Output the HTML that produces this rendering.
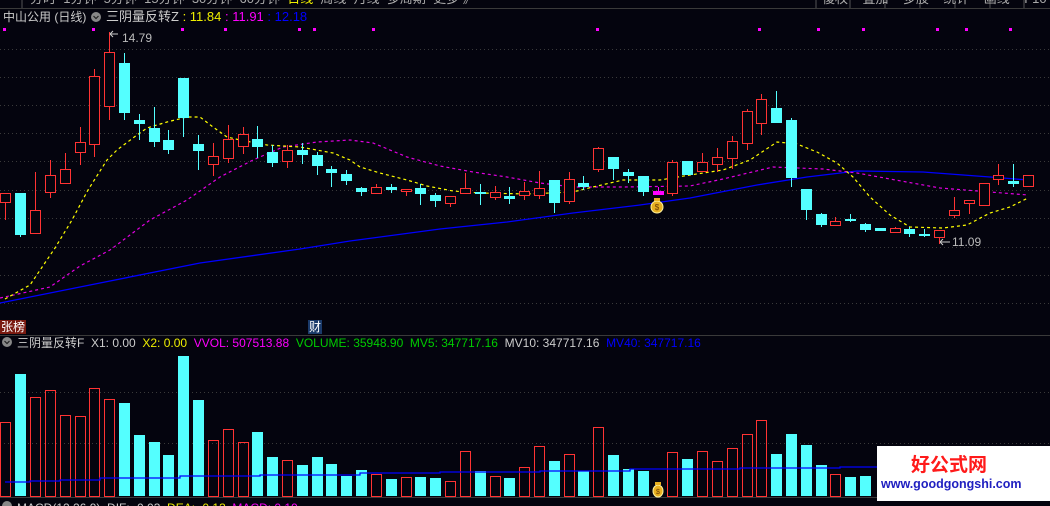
<!DOCTYPE html>
<html><head><meta charset="utf-8"><style>
html,body{margin:0;padding:0;background:#04040e;width:1050px;height:506px;overflow:hidden;font-family:"Liberation Sans","Noto Sans CJK SC",sans-serif;position:relative}
svg{position:absolute;left:0;top:0}
.t{position:absolute;white-space:nowrap;font-size:12.5px;line-height:14px}
.r{fill:#04040e;stroke:#ff3333;stroke-width:1}
.vr{fill:none;stroke:#ff3333;stroke-width:1}
.c{fill:#54ffff}
</style></head><body>
<svg width="1050" height="506" xmlns="http://www.w3.org/2000/svg">
<rect x="0" y="0" width="1050" height="8" fill="#04040e"/>
<line x1="0" y1="8.5" x2="1050" y2="8.5" stroke="#3a3a3a"/>
<g stroke="#555"><line x1="816" y1="0" x2="816" y2="8"/><line x1="850" y1="0" x2="850" y2="8"/><line x1="885" y1="0" x2="885" y2="8"/><line x1="920" y1="0" x2="920" y2="8"/><line x1="955" y1="0" x2="955" y2="8"/><line x1="990" y1="0" x2="990" y2="8"/><line x1="1024" y1="0" x2="1024" y2="8"/><line x1="22" y1="0" x2="22" y2="8"/></g>
<g stroke="#3a3a3a" stroke-dasharray="1,3">
<line x1="0" y1="49.5" x2="1050" y2="49.5"/><line x1="0" y1="77.5" x2="1050" y2="77.5"/><line x1="0" y1="105.5" x2="1050" y2="105.5"/><line x1="0" y1="133.5" x2="1050" y2="133.5"/><line x1="0" y1="161.5" x2="1050" y2="161.5"/><line x1="0" y1="190.5" x2="1050" y2="190.5"/><line x1="0" y1="218.5" x2="1050" y2="218.5"/><line x1="0" y1="247.5" x2="1050" y2="247.5"/><line x1="0" y1="275.5" x2="1050" y2="275.5"/><line x1="0" y1="303.5" x2="1050" y2="303.5"/>
<line x1="0" y1="392.5" x2="1050" y2="392.5"/><line x1="0" y1="443.5" x2="1050" y2="443.5"/>
</g>
<line x1="0" y1="335.5" x2="1050" y2="335.5" stroke="#3a3a3a"/>
<line x1="0" y1="497.5" x2="1050" y2="497.5" stroke="#3a3a3a"/>
<g fill="#ff00ff"><rect x="3" y="28" width="3" height="3"/><rect x="92" y="28" width="3" height="3"/><rect x="181" y="28" width="3" height="3"/><rect x="224" y="28" width="3" height="3"/><rect x="298" y="28" width="3" height="3"/><rect x="313" y="28" width="3" height="3"/><rect x="372" y="28" width="3" height="3"/><rect x="596" y="28" width="3" height="3"/><rect x="758" y="28" width="3" height="3"/><rect x="817" y="28" width="3" height="3"/><rect x="862" y="28" width="3" height="3"/><rect x="936" y="28" width="3" height="3"/><rect x="965" y="28" width="3" height="3"/><rect x="1009" y="28" width="3" height="3"/></g>
<polyline fill="none" stroke="#0000ff" stroke-width="1.3" points="0,303 100,283 200,263 300,249 350,241 440,229 507,222 573,213 640,205 690,198 757,185 807,177 857,171 923,172 990,177 1028,180"/>
<polyline fill="none" stroke="#e000e0" stroke-width="1.2" stroke-dasharray="3,3" points="0,298 50,287 80,266 110,250 150,220 187,200 220,177 253,160 283,147 317,142 350,140 373,143 407,157 440,166 473,172 507,177 540,183 573,187 623,187 690,186 723,179 773,167 823,169 857,173 890,179 940,188 990,192 1028,195"/>
<polyline fill="none" stroke="#ffff00" stroke-width="1.2" stroke-dasharray="3,3" points="5,299 30,285 55,248 72,220 88,190 107,160 117,150 137,135 147,128 167,122 187,117 200,117 213,127 227,137 240,140 267,145 300,147 333,153 350,160 360,167 380,173 407,180 427,186 453,191 480,193 527,194 573,192 593,187 623,180 660,180 690,175 723,170 750,160 777,142 797,144 817,152 837,163 853,177 870,197 890,215 910,227 943,228 967,225 990,213 1010,207 1028,198"/>
<path stroke="#ff3333" fill="none" d="M5.5 193V220M35.5 172V233M50.5 160V198M65.5 153V183M80.5 127V165M94.5 69V157M109.5 32V120M213.5 143V176M228.5 125V163M243.5 127V154M287.5 145V168M376.5 184V193M406.5 189V196M450.5 196V207M465.5 173V193M495.5 186V200M524.5 182V200M539.5 171V199M569.5 172V204M598.5 147V172M672.5 160V196M702.5 153V171M717.5 148V172M732.5 136V169M747.5 109V150M761.5 94V135M835.5 217V225M895.5 227V233M939.5 230V244M954.5 197V218M969.5 200V214M998.5 164V185"/>
<path stroke="#54ffff" fill="none" d="M20.5 193V237M124.5 53V120M139.5 114V140M154.5 107V147M168.5 130V154M183.5 78V137M198.5 135V170M257.5 126V158M272.5 145V167M302.5 143V164M317.5 152V175M331.5 166V187M346.5 170V185M361.5 187V196M391.5 184V193M420.5 184V205M435.5 193V207M480.5 184V205M509.5 187V204M554.5 180V213M583.5 176V190M613.5 157V180M628.5 169V183M643.5 176V196M776.5 91V123M791.5 118V187M806.5 189V220M821.5 213V227M850.5 214V222M865.5 223V232M909.5 227V237M924.5 229V237M1013.5 164V187"/>
<g class="r">
<rect x="0.5" y="193.5" width="10" height="9"/><rect x="30.5" y="210.5" width="10" height="23"/><rect x="45.5" y="175.5" width="10" height="17"/><rect x="60.5" y="169.5" width="10" height="14"/><rect x="75.5" y="142.5" width="10" height="10"/><rect x="89.5" y="76.5" width="10" height="68"/><rect x="104.5" y="52.5" width="10" height="54"/><rect x="208.5" y="156.5" width="10" height="8"/><rect x="223.5" y="139.5" width="10" height="19"/><rect x="238.5" y="134.5" width="10" height="12"/><rect x="282.5" y="150.5" width="10" height="11"/><rect x="371.5" y="187.5" width="10" height="6"/><rect x="401.5" y="189.5" width="10" height="2"/><rect x="445.5" y="196.5" width="10" height="7"/><rect x="460.5" y="188.5" width="10" height="5"/><rect x="490.5" y="192.5" width="10" height="5"/><rect x="519.5" y="191.5" width="10" height="4"/><rect x="534.5" y="188.5" width="10" height="7"/><rect x="564.5" y="179.5" width="10" height="22"/><rect x="593.5" y="148.5" width="10" height="21"/><rect x="667.5" y="162.5" width="10" height="31"/><rect x="697.5" y="162.5" width="10" height="9"/><rect x="712.5" y="157.5" width="10" height="7"/><rect x="727.5" y="141.5" width="10" height="17"/><rect x="742.5" y="111.5" width="10" height="32"/><rect x="756.5" y="99.5" width="10" height="24"/><rect x="830.5" y="221.5" width="10" height="4"/><rect x="890.5" y="228.5" width="10" height="4"/><rect x="934.5" y="230.5" width="10" height="7"/><rect x="949.5" y="210.5" width="10" height="5"/><rect x="964.5" y="200.5" width="10" height="3"/><rect x="979.5" y="183.5" width="10" height="22"/><rect x="993.5" y="175.5" width="10" height="4"/><rect x="1023.5" y="175.5" width="10" height="11"/>
</g>
<g class="c">
<rect x="15" y="193" width="11" height="42"/><rect x="119" y="63" width="11" height="50"/><rect x="134" y="120" width="11" height="4"/><rect x="149" y="128" width="11" height="14"/><rect x="163" y="140" width="11" height="10"/><rect x="178" y="78" width="11" height="40"/><rect x="193" y="144" width="11" height="7"/><rect x="252" y="139" width="11" height="8"/><rect x="267" y="152" width="11" height="11"/><rect x="297" y="150" width="11" height="5"/><rect x="312" y="155" width="11" height="11"/><rect x="326" y="169" width="11" height="4"/><rect x="341" y="174" width="11" height="7"/><rect x="356" y="188" width="11" height="4"/><rect x="386" y="187" width="11" height="3"/><rect x="415" y="188" width="11" height="6"/><rect x="430" y="195" width="11" height="6"/><rect x="475" y="192" width="11" height="2"/><rect x="504" y="196" width="11" height="3"/><rect x="549" y="180" width="11" height="23"/><rect x="578" y="183" width="11" height="4"/><rect x="608" y="157" width="11" height="12"/><rect x="623" y="172" width="11" height="4"/><rect x="638" y="176" width="11" height="16"/><rect x="682" y="161" width="11" height="14"/><rect x="771" y="108" width="11" height="15"/><rect x="786" y="120" width="11" height="58"/><rect x="801" y="189" width="11" height="21"/><rect x="816" y="214" width="11" height="11"/><rect x="845" y="219" width="11" height="2"/><rect x="860" y="224" width="11" height="6"/><rect x="875" y="228" width="11" height="3"/><rect x="904" y="229" width="11" height="5"/><rect x="919" y="234" width="11" height="2"/><rect x="1008" y="181" width="11" height="3"/>
</g>
<rect x="653" y="191" width="11" height="4" fill="#ff00ff"/>
<line x1="658.5" y1="187" x2="658.5" y2="191" stroke="#ff00ff"/>
<g><ellipse cx="657" cy="207" rx="6" ry="6" fill="#e8b020" stroke="#fff3a0"/><rect x="654" y="198" width="6" height="3" fill="#e8b020"/><text x="657" y="210" font-size="8" text-anchor="middle" fill="#6a3a00" font-family="Liberation Sans">$</text></g>
<path d="M110 34 L118 34 M110 34 L113 31 M110 34 L113 37" stroke="#ccc" fill="none"/>
<path d="M940 242 L950 242 M940 242 L943 239 M940 242 L943 245" stroke="#ccc" fill="none"/>
<g class="vr">
<rect x="0.5" y="422.5" width="10" height="74"/><rect x="30.5" y="397.5" width="10" height="99"/><rect x="45.5" y="390.5" width="10" height="106"/><rect x="60.5" y="415.5" width="10" height="81"/><rect x="75.5" y="416.5" width="10" height="80"/><rect x="89.5" y="388.5" width="10" height="108"/><rect x="104.5" y="399.5" width="10" height="97"/><rect x="208.5" y="440.5" width="10" height="56"/><rect x="223.5" y="429.5" width="10" height="67"/><rect x="238.5" y="442.5" width="10" height="54"/><rect x="282.5" y="460.5" width="10" height="36"/><rect x="371.5" y="474.5" width="10" height="22"/><rect x="401.5" y="477.5" width="10" height="19"/><rect x="445.5" y="481.5" width="10" height="15"/><rect x="460.5" y="451.5" width="10" height="45"/><rect x="490.5" y="476.5" width="10" height="20"/><rect x="519.5" y="467.5" width="10" height="29"/><rect x="534.5" y="446.5" width="10" height="50"/><rect x="564.5" y="454.5" width="10" height="42"/><rect x="593.5" y="427.5" width="10" height="69"/><rect x="667.5" y="452.5" width="10" height="44"/><rect x="697.5" y="451.5" width="10" height="45"/><rect x="712.5" y="461.5" width="10" height="35"/><rect x="727.5" y="448.5" width="10" height="48"/><rect x="742.5" y="434.5" width="10" height="62"/><rect x="756.5" y="420.5" width="10" height="76"/><rect x="830.5" y="474.5" width="10" height="22"/>
</g>
<g class="c">
<rect x="15" y="374" width="11" height="122"/><rect x="119" y="403" width="11" height="93"/><rect x="134" y="435" width="11" height="61"/><rect x="149" y="442" width="11" height="54"/><rect x="163" y="455" width="11" height="41"/><rect x="178" y="356" width="11" height="140"/><rect x="193" y="400" width="11" height="96"/><rect x="252" y="432" width="11" height="64"/><rect x="267" y="457" width="11" height="39"/><rect x="297" y="465" width="11" height="31"/><rect x="312" y="457" width="11" height="39"/><rect x="326" y="464" width="11" height="32"/><rect x="341" y="476" width="11" height="20"/><rect x="356" y="470" width="11" height="26"/><rect x="386" y="479" width="11" height="17"/><rect x="415" y="477" width="11" height="19"/><rect x="430" y="478" width="11" height="18"/><rect x="475" y="471" width="11" height="25"/><rect x="504" y="478" width="11" height="18"/><rect x="549" y="461" width="11" height="35"/><rect x="578" y="471" width="11" height="25"/><rect x="608" y="455" width="11" height="41"/><rect x="623" y="469" width="11" height="27"/><rect x="638" y="471" width="11" height="25"/><rect x="682" y="459" width="11" height="37"/><rect x="771" y="454" width="11" height="42"/><rect x="786" y="434" width="11" height="62"/><rect x="801" y="445" width="11" height="51"/><rect x="816" y="465" width="11" height="31"/><rect x="845" y="477" width="11" height="19"/><rect x="860" y="476" width="11" height="20"/>
</g>
<polyline fill="none" stroke="#0000ff" stroke-width="1.3" points="5,482 30,482 30,481 60,481 60,480 100,480 100,478 180,478 180,476 260,476 260,475 360,475 360,473 440,473 440,472 540,472 540,471 630,471 630,469 740,469 740,468 840,468 840,467 1050,467"/>
<g><ellipse cx="658" cy="491" rx="5" ry="6" fill="#e8b020" stroke="#fff3a0"/><rect x="655" y="482" width="6" height="3" fill="#e8b020"/><text x="658" y="494" font-size="7" text-anchor="middle" fill="#6a3a00" font-family="Liberation Sans">$</text></g>
<rect x="877" y="446" width="173" height="55" fill="#ffffff"/>
<circle cx="96" cy="17" r="5" fill="#888"/><path d="M93.5 16 L96 18.5 L98.5 16" stroke="#222" fill="none" stroke-width="1.2"/>
<circle cx="7" cy="342" r="5" fill="#888"/><path d="M4.5 341 L7 343.5 L9.5 341" stroke="#222" fill="none" stroke-width="1.2"/>
<circle cx="7" cy="506" r="5" fill="#888"/>
</svg>
<div class="t" style="left:30px;top:-8px;color:#aaa;font-size:13px">分时 &nbsp;1分钟 &nbsp;5分钟 &nbsp;15分钟 &nbsp;30分钟 &nbsp;60分钟 &nbsp;<span style="color:#ee0">日线</span> &nbsp;周线 &nbsp;月线 &nbsp;多周期 &nbsp;更多 》</div>
<div class="t" style="left:822px;top:-8px;width:228px;overflow:hidden;color:#aaa;font-size:13px">復权 &nbsp;&nbsp; 叠加 &nbsp;&nbsp; 多股 &nbsp;&nbsp; 统计 &nbsp;&nbsp; 画线 &nbsp;&nbsp; F10 &nbsp; 标记</div>
<div class="t" style="left:3px;top:10px;color:#ccc;font-size:12px">中山公用 (日线)</div>
<div class="t" style="left:106px;top:10px;color:#ccc;font-size:13px">三阴量反转Z <span style="color:#ee0">: 11.84</span> <span style="color:#f0f">: 11.91</span> <span style="color:#00f">: 12.18</span></div>
<div class="t" style="left:122px;top:31px;color:#bbb;font-size:12px">14.79</div>
<div class="t" style="left:952px;top:235px;color:#bbb;font-size:12px">11.09</div>
<div class="t" style="left:0;top:320px;color:#fff;background:#7a1a10;font-size:12px;padding:0 1px">张榜</div>
<div class="t" style="left:308px;top:320px;color:#fff;background:#1a3a6a;font-size:12px;padding:0 1px">财</div>
<div class="t" style="left:17px;top:336px;color:#ccc;font-size:12px">三阴量反转F &nbsp;X1: 0.00 &nbsp;<span style="color:#ee0">X2: 0.00</span> &nbsp;<span style="color:#f0f">VVOL: 507513.88</span> &nbsp;<span style="color:#0c0">VOLUME: 35948.90 &nbsp;MV5: 347717.16</span> &nbsp;MV10: 347717.16 &nbsp;<span style="color:#00f">MV40: 347717.16</span></div>
<div class="t" style="left:17px;top:501px;color:#ccc;font-size:12px">MACD(12,26,9) &nbsp;DIF: -0.03 &nbsp;<span style="color:#ee0">DEA: -0.13</span> &nbsp;<span style="color:#f0f">MACD: 0.19</span></div>
<div class="t" style="left:911px;top:453px;color:#ff1a1a;font-size:19px;line-height:22px;font-weight:bold;font-family:'Noto Sans CJK SC',sans-serif">好公式网</div>
<div class="t" style="left:881px;top:477px;color:#2020c0;font-size:12.5px;font-weight:bold">www.goodgongshi.com</div>
</body></html>
